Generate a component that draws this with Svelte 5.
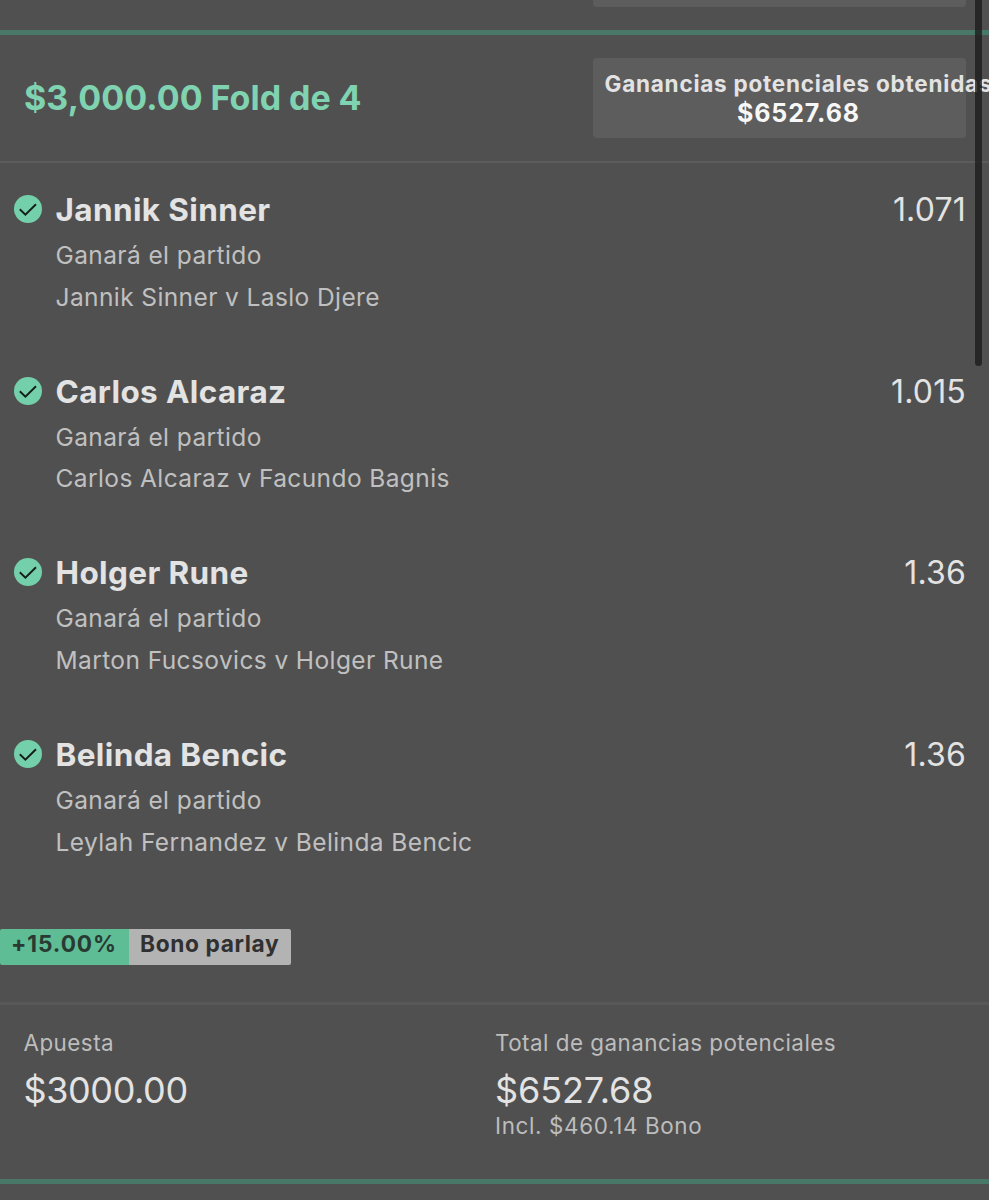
<script lang="ts">
  type Leg = {
    selection: string;
    market: string;
    fixture: string;
    odds: string;
  };

  const market = "Ganará el partido";

  let legs: Leg[] = $state([
    {
      selection: "Jannik Sinner",
      market,
      fixture: "Jannik Sinner v Laslo Djere",
      odds: "1.071",
    },
    {
      selection: "Carlos Alcaraz",
      market,
      fixture: "Carlos Alcaraz v Facundo Bagnis",
      odds: "1.015",
    },
    {
      selection: "Holger Rune",
      market,
      fixture: "Marton Fucsovics v Holger Rune",
      odds: "1.36",
    },
    {
      selection: "Belinda Bencic",
      market,
      fixture: "Leylah Fernandez v Belinda Bencic",
      odds: "1.36",
    },
  ]);
</script>

<main class="bets">
  <div class="previous">
    <div class="previous-return"></div>
  </div>

  <article class="bet">
    <header class="bet-header">
      <h1 class="title">$3,000.00 Fold de 4</h1>
      <div class="return">
        <div class="return-text">
          <span class="return-label">Ganancias potenciales obtenidas</span>
          <span class="return-value">$6527.68</span>
        </div>
      </div>
    </header>

    <ul class="legs">
      {#each legs as leg}
        <li class="leg">
          <svg class="won" viewBox="0 0 28 28" aria-hidden="true">
            <circle cx="14" cy="14" r="14" />
            <path d="M5.8 14.2 11.4 19.6 22 9.2" />
          </svg>
          <div class="leg-info">
            <h2 class="selection">{leg.selection}</h2>
            <p class="detail">{leg.market}</p>
            <p class="detail">{leg.fixture}</p>
          </div>
          <span class="odds">{leg.odds}</span>
        </li>
      {/each}
    </ul>

    <div class="bonus">
      <span class="bonus-rate">+15.00%</span>
      <span class="bonus-name">Bono parlay</span>
    </div>

    <footer class="totals">
      <div>
        <p class="label">Apuesta</p>
        <p class="amount stake">$3000.00</p>
      </div>
      <div>
        <p class="label">Total de ganancias potenciales</p>
        <p class="amount">$6527.68</p>
        <p class="included">Incl. $460.14 Bono</p>
      </div>
    </footer>
  </article>

  <div class="scrollbar"></div>
</main>

<style>
  :global(body) {
    background: #505050;
  }

  .bets {
    position: relative;
    box-sizing: border-box;
    height: 1200px;
    overflow: hidden;
    background: #505050;
    color: #e3e3e3;
    font-family: Inter, "Liberation Sans", sans-serif;
  }

  h1,
  h2,
  p,
  ul {
    margin: 0;
    padding: 0;
  }

  .previous {
    display: flex;
    justify-content: flex-end;
    height: 30px;
    padding-right: 23px;
  }

  .previous-return {
    width: 373px;
    height: 7px;
    border-radius: 0 0 4px 4px;
    background: #5d5d5d;
  }

  .bet {
    box-sizing: border-box;
    height: 1154px;
    border-top: 5px solid #4a7868;
    border-bottom: 5px solid #4a7868;
  }

  .bet-header {
    display: flex;
    align-items: center;
    justify-content: space-between;
    box-sizing: border-box;
    height: 128px;
    padding: 0 23px 1px 24px;
    border-bottom: 2px solid #5c5c5c;
  }

  .title {
    color: #80d3b1;
    font-size: 34px;
    font-weight: 700;
    line-height: 44px;
    letter-spacing: 0.1px;
    word-spacing: -0.5px;
  }

  .return {
    box-sizing: border-box;
    width: 373px;
    height: 80px;
    padding: 11px 0 0 11.5px;
    border-radius: 4px;
    background: #5d5d5d;
  }

  .return-text {
    display: flex;
    flex-direction: column;
    align-items: center;
    width: max-content;
    font-weight: 650;
    white-space: nowrap;
    line-height: 29px;
  }

  .return-label {
    font-size: 22.5px;
    letter-spacing: 0.77px;
  }

  .return-value {
    color: #f7f7f7;
    font-size: 25px;
    line-height: 30px;
    letter-spacing: 0.9px;
  }

  .legs {
    list-style: none;
  }

  .leg {
    display: flex;
    align-items: flex-start;
    box-sizing: border-box;
    height: 181.7px;
    padding: 25px 23px 0 13.5px;
  }

  .won {
    flex: none;
    width: 28px;
    height: 28px;
    margin: 7px 14px 0 0;
  }

  .won circle {
    fill: #74d0aa;
  }

  .won path {
    fill: none;
    stroke: #151d1a;
    stroke-width: 1.9;
  }

  .leg-info {
    flex: 1;
  }

  .selection {
    margin-bottom: 4px;
    font-size: 31.5px;
    font-weight: 700;
    line-height: 43px;
    letter-spacing: 0.37px;
  }

  .detail {
    color: #c0c0c0;
    font-size: 24.5px;
    line-height: 41.5px;
    letter-spacing: 0.4px;
  }

  .odds {
    font-size: 32px;
    font-weight: 400;
    line-height: 44px;
    letter-spacing: 0.2px;
  }

  .bonus {
    display: flex;
    width: max-content;
    height: 36.5px;
    margin-top: 39px;
    overflow: hidden;
    border-radius: 2px;
    color: #303030;
    font-size: 22.7px;
    font-weight: 650;
    line-height: 29.5px;
    letter-spacing: 0.65px;
  }

  .bonus-rate {
    box-sizing: border-box;
    width: 129px;
    padding-left: 11px;
    background: #5fbd96;
    color: #293a33;
    letter-spacing: 0.9px;
  }

  .bonus-name {
    box-sizing: border-box;
    width: 162px;
    padding-left: 11px;
    background: #b3b3b3;
  }

  .totals {
    display: grid;
    grid-template-columns: 471.5px 1fr;
    margin-top: 37px;
    padding: 24px 0 0 23.5px;
    border-top: 3px solid #585858;
  }

  .label,
  .included {
    color: #bdbdbd;
    font-size: 22.4px;
    line-height: 28px;
    letter-spacing: 0.48px;
  }

  .amount {
    margin-top: 11px;
    font-size: 36px;
    font-weight: 400;
    line-height: 44px;
    letter-spacing: -0.1px;
  }

  .stake {
    letter-spacing: -0.4px;
  }

  .included {
    letter-spacing: 0.65px;
  }

  /* overlaid on the list, like the native one on a phone */
  .scrollbar {
    position: absolute;
    top: -10px;
    right: 7px;
    width: 7px;
    height: 376px;
    border-radius: 4px;
    background: rgba(24, 24, 24, 0.75);
  }
</style>
